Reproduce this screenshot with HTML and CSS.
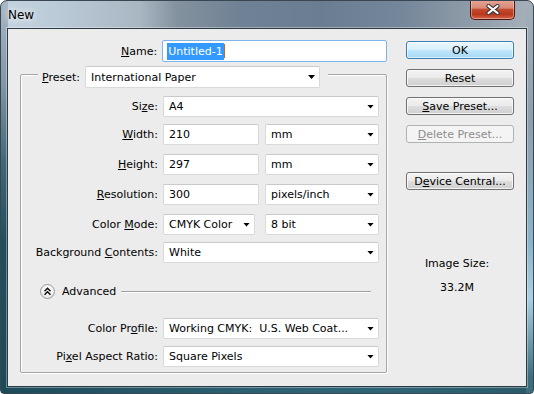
FILE: index.html
```html
<!DOCTYPE html>
<html>
<head>
<meta charset="utf-8">
<link rel="stylesheet" href="styles.css">
</head>
<body>
<div class="window">
  <div class="titlebar">
    <span class="title">New</span>
    <div class="close">
      <svg width="14" height="11" viewBox="0 0 14 11">
        <path d="M2.5 2 L11.5 9 M11.5 2 L2.5 9" stroke="#3a3a3a" stroke-width="4.2" stroke-linecap="round"/>
        <path d="M2.5 2 L11.5 9 M11.5 2 L2.5 9" stroke="#ffffff" stroke-width="2.2" stroke-linecap="round"/>
      </svg>
    </div>
  </div>
  <div class="client">
    <div class="form">
      <div class="name-row">
        <span class="lbl name-lbl"><u>N</u>ame:</span>
        <div class="field input focus"><span class="selected">Untitled-1</span><span class="caret"></span></div>
      </div>
      <div class="group">
        <div class="legend">
          <span class="lbl"><u>P</u>reset:</span>
          <div class="field select preset"><span>International Paper</span><i class="arrow"></i></div>
        </div>
        <div class="row r-size">
          <span class="lbl">Si<u>z</u>e:</span>
          <div class="field select full"><span>A4</span><i class="arrow"></i></div>
        </div>
        <div class="row r-width">
          <span class="lbl"><u>W</u>idth:</span>
          <div class="field input num"><span>210</span></div>
          <div class="field select unit"><span>mm</span><i class="arrow"></i></div>
        </div>
        <div class="row r-height">
          <span class="lbl"><u>H</u>eight:</span>
          <div class="field input num"><span>297</span></div>
          <div class="field select unit"><span>mm</span><i class="arrow"></i></div>
        </div>
        <div class="row r-res">
          <span class="lbl"><u>R</u>esolution:</span>
          <div class="field input num"><span>300</span></div>
          <div class="field select unit"><span>pixels/inch</span><i class="arrow"></i></div>
        </div>
        <div class="row r-mode">
          <span class="lbl">Color <u>M</u>ode:</span>
          <div class="field select mode"><span>CMYK Color</span><i class="arrow"></i></div>
          <div class="field select unit wide-gap"><span>8 bit</span><i class="arrow"></i></div>
        </div>
        <div class="row r-bg">
          <span class="lbl">Background <u>C</u>ontents:</span>
          <div class="field select full"><span>White</span><i class="arrow"></i></div>
        </div>
        <div class="adv-row">
          <div class="adv-btn">
            <svg width="15" height="15" viewBox="0 0 15 15">
              <path d="M4.5 7.2 L7.5 4.2 L10.5 7.2 M4.5 10.8 L7.5 7.8 L10.5 10.8" fill="none" stroke="#111" stroke-width="1.5"/>
            </svg>
          </div>
          <span class="adv-text">Advanced</span>
          <span class="adv-line"></span>
        </div>
        <div class="row r-profile">
          <span class="lbl">Color Pr<u>o</u>file:</span>
          <div class="field select full"><span>Working CMYK:&nbsp; U.S. Web Coat...</span><i class="arrow"></i></div>
        </div>
        <div class="row r-pixel">
          <span class="lbl">Pi<u>x</u>el Aspect Ratio:</span>
          <div class="field select full"><span>Square Pixels</span><i class="arrow"></i></div>
        </div>
      </div>
    </div>
    <div class="side">
      <div class="btn default">OK</div>
      <div class="btn gap">Reset</div>
      <div class="btn gap"><span><u>S</u>ave Preset...</span></div>
      <div class="btn gap disabled"><span><u>D</u>elete Preset...</span></div>
      <div class="btn gap-big"><span>D<u>e</u>vice Central...</span></div>
      <div class="imgsize">
        <div>Image Size:</div>
        <div class="imgsize-val">33.2M</div>
      </div>
    </div>
  </div>
</div>
</body>
</html>
```

FILE: styles.css
```css
html, body {
  margin: 0;
  padding: 0;
  background: #ffffff;
}

body {
  font-family: "DejaVu Sans", "Liberation Sans", sans-serif;
  font-size: 11px;
  color: #000;
}

.window {
  width: 534px;
  height: 394px;
  box-sizing: border-box;
  border: 1px solid #3a4652;
  border-radius: 7px 7px 4px 4px;
  display: flex;
  flex-direction: column;
  overflow: hidden;
  background:
    linear-gradient(180deg, #a8b8c6 0%, #7f95a5 22%, #3e6676 42%, #1f4f5f 62%, #1d4a59 100%) left top / 7px 100% no-repeat,
    linear-gradient(180deg, #a3aeb8 0%, #8e9fae 30%, #8ab4cb 62%, #a9d0e3 76%, #3d6e7e 96%) right top / 7px 100% no-repeat,
    linear-gradient(90deg, #1d4b5a 0%, #2b6070 45%, #2f6676 70%, #2a5b6a 100%) left bottom / 100% 8px no-repeat,
    linear-gradient(90deg, #c4d3df 0%, #bccbd8 10%, #a9b7c3 26%, #84929f 33%, #6f8194 45%, #6b7d90 60%, #74869a 75%, #8e9ba8 88%, #a6b1bb 100%);
}

.titlebar {
  height: 28px;
  flex: 0 0 28px;
  display: flex;
  align-items: flex-start;
  justify-content: space-between;
}

.title {
  margin: 7px 0 0 7px;
  font-family: "DejaVu Sans", sans-serif;
  font-size: 12px;
  color: #000;
  text-shadow: 0 0 6px rgba(255, 255, 255, 0.9), 0 0 10px rgba(255, 255, 255, 0.7);
}

.close {
  width: 45px;
  height: 20px;
  box-sizing: border-box;
  margin: -1px 18px 0 0;
  border: 1px solid #4a1a12;
  border-top: none;
  border-radius: 0 0 5px 5px;
  background: linear-gradient(180deg, #e6a596 0%, #d98a78 42%, #c44a30 50%, #b9371c 75%, #d5654a 100%);
  box-shadow: inset 0 0 0 1px rgba(255, 220, 210, 0.45);
  display: flex;
  align-items: center;
  justify-content: center;
}

.close svg {
  display: block;
}

.client {
  flex: 1;
  margin: 0 7px 7px 7px;
  background: #ececec;
  display: flex;
  box-shadow: 0 0 0 1px #2c3a44, 0 0 0 2px rgba(255, 255, 255, 0.35);
}

.form {
  width: 379px;
  flex: 0 0 379px;
}

.lbl {
  white-space: nowrap;
}

u {
  text-decoration: underline;
  text-underline-offset: 1px;
}

.name-row {
  margin-top: 11px;
  display: flex;
  align-items: center;
}

.name-lbl {
  width: 150px;
  margin-right: 5px;
  text-align: right;
}

.field {
  box-sizing: border-box;
  height: 21px;
  background: #ffffff;
  border: 1px solid #d9d9d9;
  border-top-color: #c9c9c9;
  border-radius: 2px;
  display: flex;
  align-items: center;
  padding-left: 5px;
  white-space: nowrap;
  overflow: hidden;
}

.field.focus {
  width: 226px;
  height: 22px;
  border-color: #7eb4ea;
  padding-left: 4px;
}

.selected {
  background: #3399ff;
  color: #ffffff;
  padding: 2px 1px 2px 1px;
}

.caret {
  width: 1px;
  height: 14px;
  background: #c86a10;
}

.arrow {
  margin-left: auto;
  margin-right: 4px;
  width: 7px;
  height: 4px;
  background: #000;
  clip-path: polygon(0 0, 100% 0, 50% 100%);
  flex: 0 0 7px;
}

.group {
  margin: 12px 0 0 12px;
  width: 367px;
  height: 299px;
  box-sizing: border-box;
  border: 1px solid #a5a5a5;
  border-radius: 2px;
  box-shadow: inset 1px 1px 0 #ffffff, 1px 1px 0 #ffffff;
}

.legend {
  margin: -9px 0 0 17px;
  padding: 0 8px 0 4px;
  width: fit-content;
  background: #ececec;
  display: flex;
  align-items: center;
  gap: 5px;
}

.field.preset {
  width: 235px;
  height: 22px;
}

.row {
  display: flex;
  align-items: center;
  height: 21px;
}

.row .lbl {
  width: 137px;
  margin-right: 5px;
  text-align: right;
}

.field.full {
  width: 216px;
}

.field.num {
  width: 96px;
}

.field.unit {
  width: 114px;
  margin-left: 6px;
}

.field.unit.wide-gap {
  margin-left: 10px;
}

.field.mode {
  width: 92px;
}

.r-size { margin-top: 8px; }
.r-width { margin-top: 7px; }
.r-height { margin-top: 9px; }
.r-res { margin-top: 9px; }
.r-mode { margin-top: 9px; }
.r-bg { margin-top: 7px; }
.r-profile { margin-top: 19px; }
.r-pixel { margin-top: 7px; }

.adv-row {
  margin: 20px 15px 0 19px;
  height: 16px;
  display: flex;
  align-items: center;
}

.adv-btn {
  width: 15px;
  height: 15px;
  box-sizing: border-box;
  border: 1px solid #9a9a9a;
  border-radius: 50%;
  background: radial-gradient(circle at 50% 35%, #ffffff 0%, #f3f3f3 50%, #d6d6d6 100%);
  display: flex;
  align-items: center;
  justify-content: center;
  overflow: hidden;
}

.adv-btn svg {
  display: block;
  flex: 0 0 15px;
}

.adv-text {
  margin-left: 7px;
}

.adv-line {
  flex: 1;
  height: 1px;
  margin-left: 5px;
  background: #a0a0a0;
  box-shadow: 0 1px 0 #ffffff;
}

.side {
  margin-left: 19px;
  width: 108px;
  display: flex;
  flex-direction: column;
}

.btn {
  box-sizing: border-box;
  height: 18px;
  border: 1px solid #707070;
  border-radius: 3px;
  background: linear-gradient(180deg, #f3f3f3 0%, #ebebeb 48%, #dddddd 52%, #cfcfcf 100%);
  box-shadow: inset 0 0 0 1px rgba(255, 255, 255, 0.75);
  display: flex;
  align-items: center;
  justify-content: center;
  white-space: nowrap;
}

.btn.default {
  margin-top: 12px;
  border-color: #3c7fb1;
  background: linear-gradient(180deg, #eaf6fd 0%, #d9f0fc 48%, #bee6fd 52%, #a7d9f5 100%);
  box-shadow: inset 0 0 0 1px rgba(255, 255, 255, 0.6);
}

.btn.gap {
  margin-top: 10px;
}

.btn.gap-big {
  margin-top: 29px;
}

.btn.disabled {
  border-color: #adb2b5;
  background: #f4f4f4;
  color: #8d8d8d;
  box-shadow: none;
}

.imgsize {
  margin-top: 67px;
  padding-right: 6px;
  text-align: center;
  line-height: 14px;
}

.imgsize-val {
  margin-top: 10px;
}
```
